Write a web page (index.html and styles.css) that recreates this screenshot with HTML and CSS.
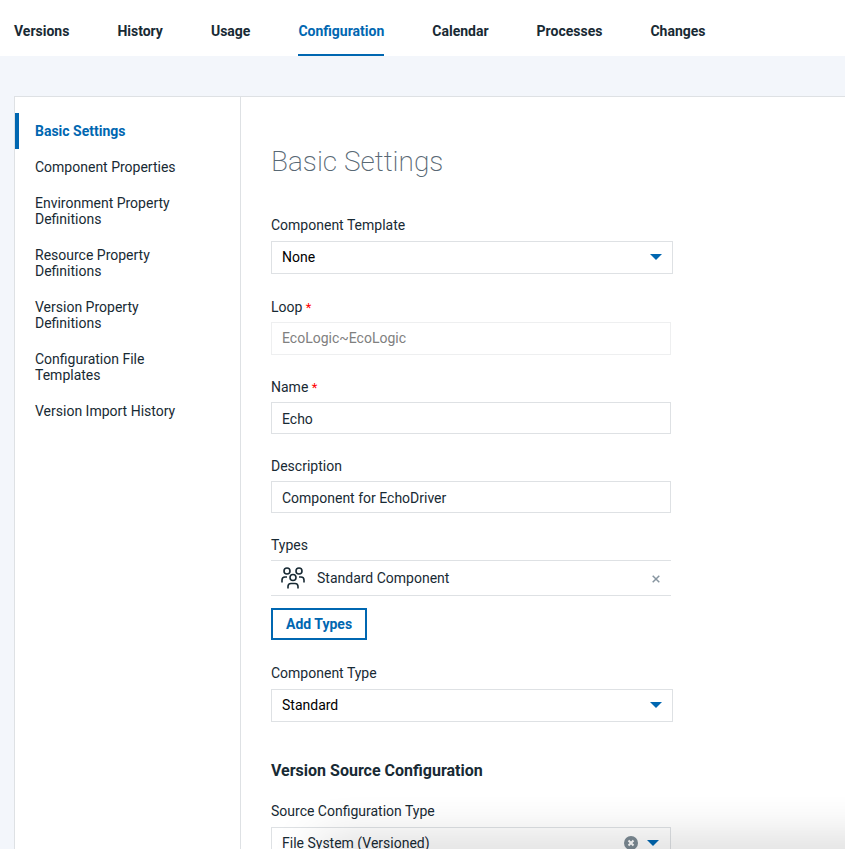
FILE: index.html
```html
<!DOCTYPE html>
<html lang="en">
<head>
<meta charset="utf-8">
<meta name="viewport" content="width=device-width, initial-scale=1">
<title>Component Configuration</title>
<link rel="stylesheet" href="styles.css">
</head>
<body>
<div class="page">
  <nav class="tabs" aria-label="Component">
    <a href="#versions">Versions</a>
    <a href="#history">History</a>
    <a href="#usage">Usage</a>
    <a class="active" href="#configuration" aria-current="page">Configuration</a>
    <a href="#calendar">Calendar</a>
    <a href="#processes">Processes</a>
    <a href="#changes">Changes</a>
  </nav>
  <div class="panel">
    <nav class="sidebar" aria-label="Configuration">
      <a class="active" href="#basic"><span>Basic Settings</span></a>
      <a href="#component"><span>Component Properties</span></a>
      <a href="#environment"><span>Environment Property Definitions</span></a>
      <a href="#resource"><span>Resource Property Definitions</span></a>
      <a href="#version"><span>Version Property Definitions</span></a>
      <a href="#templates"><span>Configuration File Templates</span></a>
      <a href="#import"><span>Version Import History</span></a>
    </nav>
    <main class="content">
      <h1>Basic Settings</h1>
      <form class="form">
        <div class="field field-select">
          <label for="template">Component Template</label>
          <div class="select">
            <select id="template"><option>None</option></select>
            <svg class="arrow" viewBox="0 0 12 6"><path d="M0 0h12L6 6z"/></svg>
          </div>
        </div>
        <div class="field">
          <label for="loop">Loop <span class="required">*</span></label>
          <input class="box locked" id="loop" type="text" value="EcoLogic~EcoLogic" disabled>
        </div>
        <div class="field">
          <label for="name">Name <span class="required">*</span></label>
          <input class="box" id="name" type="text" value="Echo">
        </div>
        <div class="field">
          <label for="description">Description</label>
          <input class="box" id="description" type="text" value="Component for EchoDriver">
        </div>
        <div class="field field-types">
          <div class="label">Types</div>
          <div class="type-row">
            <svg class="people" viewBox="0 0 24 22">
              <circle cx="6" cy="4" r="3"/>
              <circle cx="18" cy="4" r="3"/>
              <circle cx="12" cy="10.5" r="3"/>
              <path d="M1 15.500v-2.500A3 3 0 0 1 4 10H6M23 15.500v-2.500A3 3 0 0 0 20 10H18M7 21.500V19.500a3 3 0 0 1 3-3h4A3 3 0 0 1 17 19.500v2"/>
            </svg>
            <span class="type-name">Standard Component</span>
            <button class="icon-button" type="button" aria-label="Remove">
              <svg class="cross" viewBox="0 0 8 8"><path d="M.7.700l6.600 6.600M7.300.700L.7 7.300"/></svg>
            </button>
          </div>
          <button class="add" type="button">Add Types</button>
        </div>
        <div class="field field-select">
          <label for="type">Component Type</label>
          <div class="select">
            <select id="type"><option>Standard</option></select>
            <svg class="arrow" viewBox="0 0 12 6"><path d="M0 0h12L6 6z"/></svg>
          </div>
        </div>
        <h2>Version Source Configuration</h2>
        <div class="field field-select">
          <label for="source">Source Configuration Type</label>
          <div class="combo">
            <input id="source" type="text" value="File System (Versioned)">
            <button class="icon-button" type="button" aria-label="Clear">
              <svg class="clear" viewBox="0 0 14 14"><circle cx="7" cy="7" r="7"/><path d="M4.500 4.500l5 5M9.500 4.500l-5 5"/></svg>
            </button>
            <button class="icon-button" type="button" aria-label="Open">
              <svg class="arrow" viewBox="0 0 12 6"><path d="M0 0h12L6 6z"/></svg>
            </button>
          </div>
        </div>
      </form>
    </main>
  </div>
  <div class="shade"></div>
</div>
</body>
</html>
```
FILE: styles.css
```css
* {
  box-sizing: border-box;
}

body {
  margin: 0;
  background: #f3f6fb;
  color: #182a34;
  font: 14px/16px Roboto, "Liberation Sans", sans-serif;
}

a {
  color: inherit;
  text-decoration: none;
}

input,
select,
button {
  margin: 0;
  color: inherit;
  font: inherit;
}

svg {
  display: block;
}

.page {
  display: flex;
  flex-direction: column;
  height: 100vh;
  overflow: hidden;
}

.tabs {
  display: flex;
  flex: none;
  gap: 48px;
  height: 56px;
  padding: 0 14px;
  background: #fff;
  font-weight: 700;
}

.tabs a {
  padding-top: 23px;
  border-bottom: 2px solid transparent;
}

.tabs .active {
  border-color: #0067b1;
  color: #0067b1;
}

.panel {
  display: flex;
  flex: 1;
  min-height: 0;
  margin: 40px 0 0 14px;
  border: solid #dee1e4;
  border-width: 1px 0 0 1px;
  background: #fff;
}

.sidebar {
  flex: none;
  width: 226px;
  padding-top: 16px;
  border-right: 1px solid #dee1e4;
}

.sidebar a {
  display: block;
  padding: 10px 16px;
  border-left: 4px solid transparent;
}

.sidebar span {
  display: block;
  max-width: 164px;
}

.sidebar .active {
  border-color: #0067b1;
  color: #0067b1;
  font-weight: 700;
}

.content {
  flex: 1;
  min-width: 0;
  padding: 49px 30px 0;
}

h1 {
  margin: 0 0 39px;
  color: #586874;
  font-size: 28px;
  font-weight: 200;
  line-height: 32px;
}

h2 {
  margin: 39px 0 22px;
  font-size: 16px;
  font-weight: 700;
  line-height: 20px;
}

.form {
  max-width: 400px;
}

.field {
  display: flex;
  flex-direction: column;
  gap: 7px;
  margin-bottom: 24px;
}

.field-select {
  gap: 8px;
  margin-bottom: 25px;
}

.required {
  color: #f00;
  font-size: 13px;
  line-height: 0;
}

.box {
  width: 100%;
  height: 32px;
  padding: 2px 10px 0;
  border: 1px solid #dee1e4;
  border-radius: 0;
  background: #fff;
}

.locked {
  height: 33px;
  padding: 0 10px 2px;
  border-color: #eeeff0;
  color: #808080;
}

.select {
  display: grid;
  align-items: center;
  width: calc(100% + 2px);
}

.select select,
.select svg {
  grid-area: 1 / 1;
}

.select select {
  width: 100%;
  height: 33px;
  padding: 0 32px 2px 10px;
  border: 1px solid #dee1e4;
  border-radius: 0;
  background: #fff;
  color: #000;
  appearance: none;
}

.arrow {
  width: 12px;
  height: 6px;
  fill: #0067b1;
  pointer-events: none;
}

.select .arrow {
  justify-self: end;
  margin: 0 11px 1px 0;
}

.type-row {
  display: flex;
  align-items: center;
  height: 36px;
  padding: 0 10px;
  border: solid #dee1e4;
  border-width: 1px 0;
}

.people {
  width: 24px;
  height: 22px;
  fill: none;
  stroke: #182a34;
  stroke-width: 1.6;
}

.type-name {
  flex: 1;
  margin-left: 12px;
}

.icon-button {
  padding: 0;
  border: 0;
  background: none;
}

.cross {
  width: 8px;
  height: 8px;
  margin: 2px 1px 0;
  fill: none;
  stroke: #8795a0;
  stroke-width: 1.5;
}

.add {
  align-self: flex-start;
  height: 32px;
  margin-top: 5px;
  padding: 0 13px;
  border: 2px solid #0067b1;
  background: #fff;
  color: #0067b1;
  font-weight: 700;
}

.field-types {
  margin-bottom: 25px;
}

.combo {
  display: flex;
  gap: 9px;
  align-items: center;
  height: 32px;
  padding-right: 11px;
  border: 1px solid #dee1e4;
}

.combo input {
  flex: 1;
  min-width: 0;
  padding: 0 0 0 10px;
  border: 0;
  background: none;
}

.clear {
  width: 14px;
  height: 14px;
  fill: #7d8b95;
  stroke: #fff;
  stroke-width: 2;
}

.clear circle {
  stroke: none;
}

.shade {
  position: fixed;
  right: -60px;
  bottom: -20px;
  left: 320px;
  height: 20px;
  box-shadow: 0 0 50px rgba(0, 0, 0, 0.32);
  pointer-events: none;
}
```
